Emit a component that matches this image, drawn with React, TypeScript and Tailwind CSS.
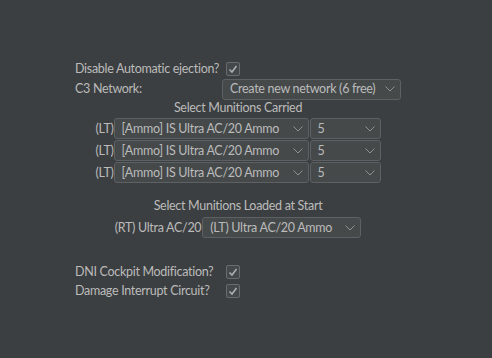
import { ReactNode } from 'react';

const Chevron = () => (
  <svg width="10" height="6" viewBox="0 0 10 6" className="shrink-0">
    <path d="M0.5 0.5 L5 5 L9.5 0.5" fill="none" stroke="#8f9294" strokeWidth="1" />
  </svg>
);

const Combo = ({ value, width }: { value: string; width: string }) => (
  <div
    className={`${width} h-[21px] shrink-0 flex items-center justify-between pl-[7px] pr-[5px] rounded-[3px] border border-[#5e6163] bg-[#45494a] text-[#bbbbbb]`}
  >
    <span className="whitespace-nowrap">{value}</span>
    <Chevron />
  </div>
);

const Check = () => (
  <div className="ml-[4px] w-[14px] h-[14px] rounded-[2px] border border-[#6b6b6b] bg-[#43494a] flex items-center justify-center">
    <svg width="12" height="12" viewBox="0 0 12 12">
      <path d="M2.5 6.5 L5 9 L9.5 3" fill="none" stroke="#b0b0b0" strokeWidth="1.5" />
    </svg>
  </div>
);

const Row = ({ label, children, h }: { label: string; children: ReactNode; h: string }) => (
  <div className={`flex items-center ${h}`}>
    <span className="w-[147px] shrink-0 whitespace-nowrap">{label}</span>
    {children}
  </div>
);

const munitions = [0, 1, 2];

export default function App() {
  return (
    <div
      className="w-[492px] h-[358px] bg-[#3c3f41] text-[#bbbbbb] text-[12.5px] leading-[16px] tracking-[-0.3px] overflow-hidden"
      style={{ fontFamily: 'Lato, "Noto Sans", sans-serif' }}
    >
      <div className="w-[476px] pt-[59px] flex flex-col items-center">
        <div className="w-[326px]">
          <Row label="Disable Automatic ejection?" h="h-[19px]">
            <Check />
          </Row>
          <Row label="C3 Network:" h="h-[22px]">
            <Combo value="Create new network (6 free)" width="w-[179px]" />
          </Row>
        </div>

        <div className="h-[16px] whitespace-nowrap">Select Munitions Carried</div>

        <div className="mt-[2px] flex flex-col">
          {munitions.map((i) => (
            <div key={i} className="flex h-[22px] items-start">
              <span className="self-center pb-[1px] whitespace-nowrap">(LT)</span>
              <Combo value="[Ammo] IS Ultra AC/20 Ammo" width="w-[195px]" />
              <div className="ml-[1px]">
                <Combo value="5" width="w-[71px]" />
              </div>
            </div>
          ))}
        </div>

        <div className="mt-[14px] h-[16px] whitespace-nowrap">Select Munitions Loaded at Start</div>

        <div className="mt-[3px] flex items-center">
          <span className="whitespace-nowrap">(RT) Ultra AC/20</span>
          <div className="ml-[1px]">
            <Combo value="(LT) Ultra AC/20 Ammo" width="w-[159px]" />
          </div>
        </div>

        <div className="mt-[24px] w-[326px]">
          <Row label="DNI Cockpit Modification?" h="h-[19px]">
            <Check />
          </Row>
          <Row label="Damage Interrupt Circuit?" h="h-[19px]">
            <Check />
          </Row>
        </div>
      </div>
    </div>
  );
}
